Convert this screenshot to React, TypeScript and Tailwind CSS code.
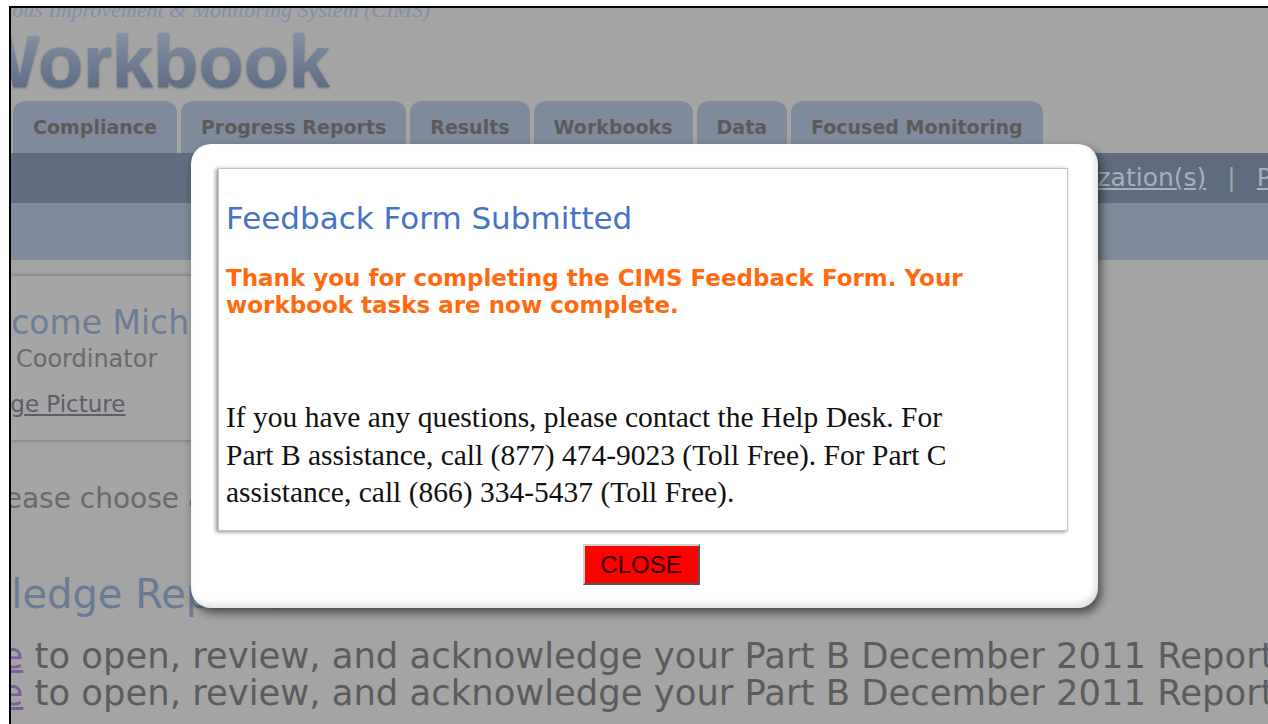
const tabs = ['Compliance', 'Progress Reports', 'Results', 'Workbooks', 'Data', 'Focused Monitoring'];

function Tab({ label }: { label: string }) {
  return (
    <div className="flex h-full items-center rounded-t-[12px] bg-[#7f8a9c] px-[20px] text-[19px] font-bold text-[#5c5a59]">
      {label}
    </div>
  );
}

function FeedbackDialog() {
  return (
    <div className="absolute left-[180px] top-[136px] w-[907px] rounded-[20px] bg-white pl-[27px] pr-[30px] pt-[24px] pb-[23px] shadow-[3px_5px_10px_rgba(0,0,0,0.55),inset_-3px_-4px_6px_rgba(0,0,0,0.12)]">
      <div className="h-[363px] border border-[#c4c4c4] bg-white pl-[7px] pt-[31px] shadow-[-2px_1px_4px_rgba(0,0,0,0.45)]">
        <div className="w-[745px]">
          <h2 className="text-[31px] leading-[36px] text-[#4673c6]">Feedback Form Submitted</h2>
          <p className="mt-[29px] text-[23px] font-bold leading-[27px] text-[#ff6a10]">
            Thank you for completing the CIMS Feedback Form. Your workbook tasks are now complete.
          </p>
          <p className="mt-[80px] font-['Liberation_Serif',serif] text-[29.5px] leading-[37.5px] text-[#111]">
            If you have any questions, please contact the Help Desk. For Part B assistance, call (877) 474-9023 (Toll
            Free). For Part C assistance, call (866) 334-5437 (Toll Free).
          </p>
        </div>
      </div>
      <div className="mt-[13px] flex justify-center pr-[4px]">
        <button className="h-[41px] w-[117px] border-2 border-t-[#d0d0d0] border-l-[#d0d0d0] border-b-[#555] border-r-[#555] bg-[#ff0000] font-['Liberation_Sans',sans-serif] text-[24px] leading-none text-[#2a0000]">
          CLOSE
        </button>
      </div>
    </div>
  );
}

export default function App() {
  return (
    <div className="h-[724px] w-[1268px] overflow-hidden bg-white pl-[9px] pt-[6px]">
      <div className="relative h-full overflow-hidden border-l-2 border-t-2 border-black bg-[#a4a4a4] font-['DejaVu_Sans',sans-serif]">
        {/* page header */}
        <div className="-mt-[9px] flex w-[419px] justify-end whitespace-nowrap font-['Liberation_Serif',serif] text-[22px] italic leading-[22px] text-[#8290aa]">
          <span className="shrink-0">Continuous Improvement &amp; Monitoring System (CIMS)</span>
        </div>
        <div className="mt-[4px] flex w-[319px] justify-end whitespace-nowrap">
          <h1 className="shrink-0 bg-linear-to-b from-[#8a96ab] to-[#56657f] bg-clip-text font-['Liberation_Sans',sans-serif] text-[74px] font-bold leading-[74px] text-transparent drop-shadow-[0_1px_1px_rgba(0,0,0,0.35)]">
            Workbook
          </h1>
        </div>

        <nav className="mt-[2px] flex h-[52px] gap-[4px] whitespace-nowrap pl-[2px]">
          {tabs.map(t => (
            <Tab key={t} label={t} />
          ))}
        </nav>
        <div className="flex h-[50px] items-center whitespace-nowrap bg-[#5f6b7e] pl-[1003px] text-[25px] text-[#a9afbd]">
          <a className="underline">Organization(s)</a>
          <span className="mx-[21px] text-[#9ea5b3]">|</span>
          <a className="underline">Profile</a>
        </div>
        <div className="h-[57px] bg-[#7f8a9c]" />

        {/* welcome panel */}
        <div className="mt-[16px] h-[164px] w-[600px] bg-[#a5a5a5] pt-[27px] shadow-[0_0_5px_rgba(0,0,0,0.35)]">
          <div className="-ml-[60px] whitespace-nowrap">
            <div className="text-[33px] leading-[40px] text-[#6d7c97]">Welcome Michelle</div>
            <div className="mt-[1px] text-[24px] leading-[30px] text-[#6a6a6a]">Data Coordinator</div>
            <a className="mt-[15px] block text-[23px] leading-[30px] text-[#5e5d68] underline">Change Picture</a>
          </div>
        </div>

        <p className="-ml-[31px] mt-[42px] whitespace-nowrap text-[28px] leading-[34px] text-[#6a6a6a]">
          Please choose a report below.
        </p>
        <h3 className="-ml-[154px] mt-[54px] whitespace-nowrap text-[40px] leading-[48px] text-[#6b7b95]">
          Acknowledge Reports
        </h3>
        <div className="-ml-[163px] mt-[19px] whitespace-nowrap text-[35.4px] leading-[37px] text-[#5c5c5c]">
          <p>
            <a className="text-[#7f5d9a] underline">Click here</a> to open, review, and acknowledge your Part B December
            2011 Report
          </p>
          <p>
            <a className="text-[#7f5d9a] underline">Click here</a> to open, review, and acknowledge your Part B December
            2011 Report
          </p>
        </div>

        <FeedbackDialog />
      </div>
    </div>
  );
}
